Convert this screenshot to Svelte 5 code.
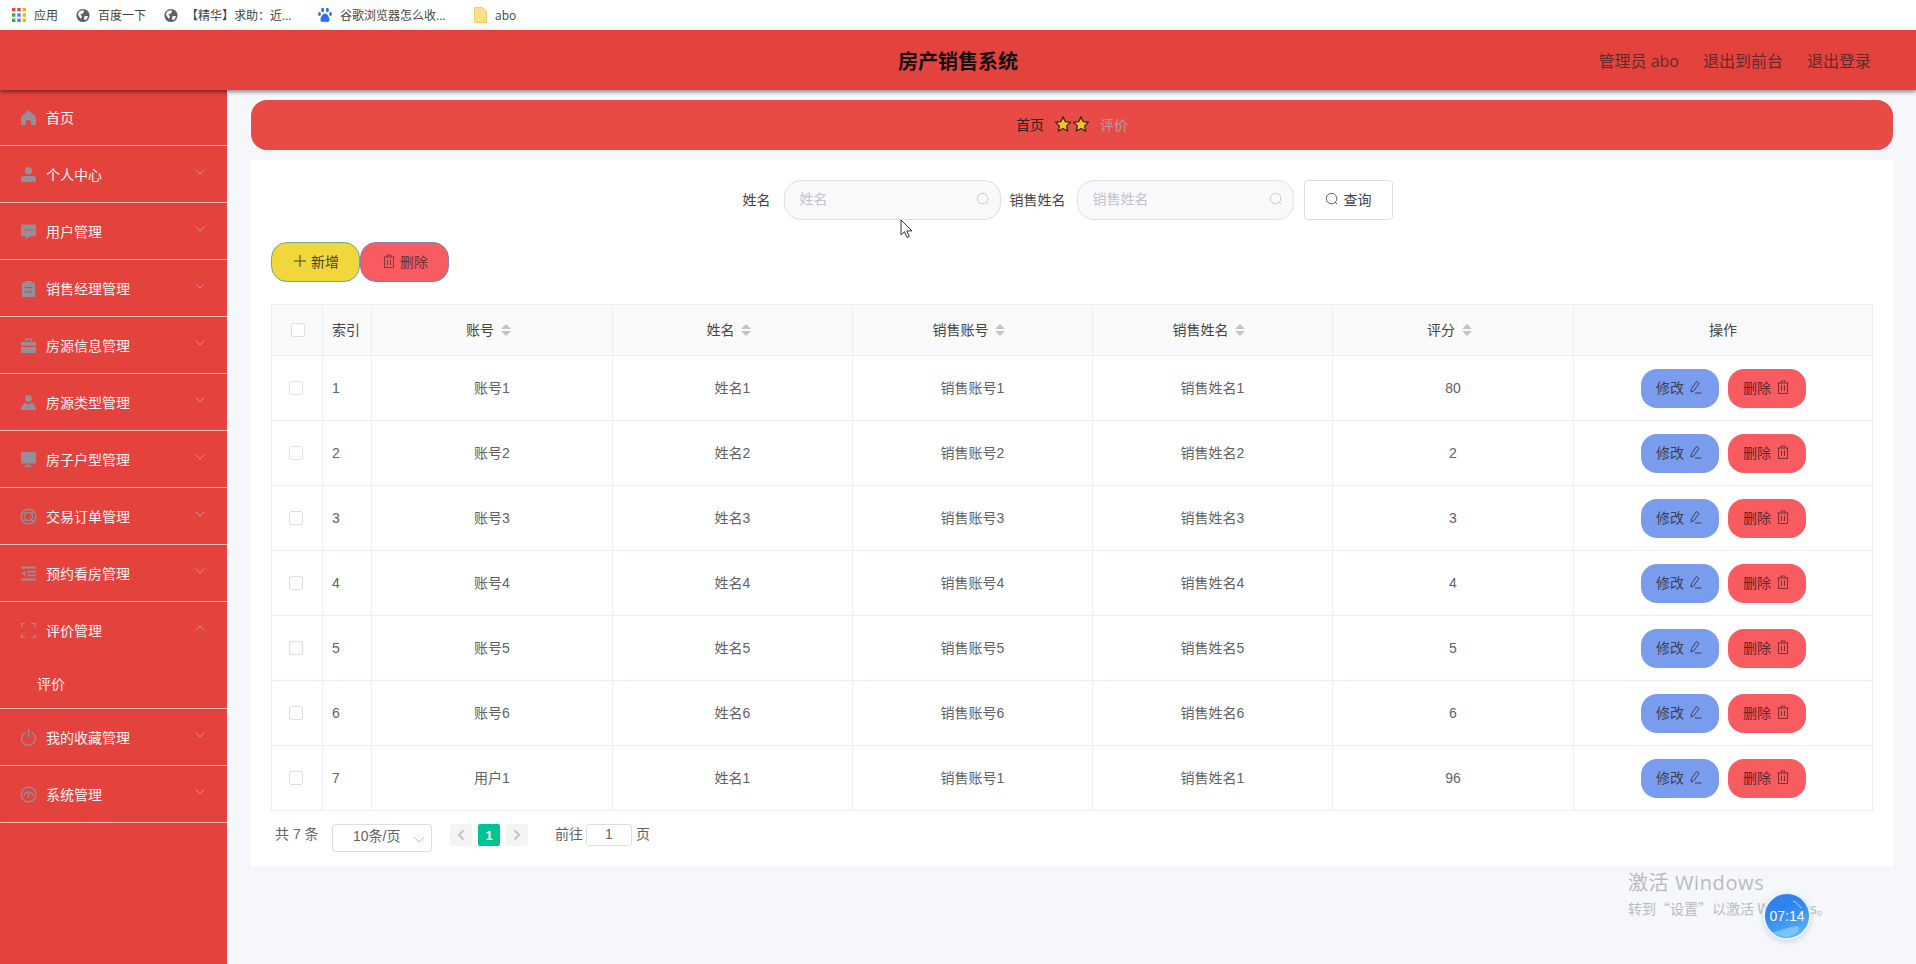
<script>
  const bookmarks = [
    { icon: 'apps', label: '应用', width: 64 },
    { icon: 'globe', label: '百度一下', width: 88 },
    { icon: 'globe', label: '【精华】求助：近...', width: 154 },
    { icon: 'paw', label: '谷歌浏览器怎么收...', width: 155 },
    { icon: 'folder', label: 'abo', width: 60 }
  ];

  const icons = {
    home: { d: 'M8 1 15 7.2V15h-4.5v-4.5h-5V15H1V7.2Z' },
    user: { d: 'M8 1a3.4 3.4 0 1 1 0 6.8A3.4 3.4 0 0 1 8 1ZM1 15v-2.6a3 3 0 0 1 3-3h8a3 3 0 0 1 3 3V15Z' },
    chat: { d: 'M1.8 1.5h12.4a.8.8 0 0 1 .8.8v9.4a.8.8 0 0 1-.8.8H8.6L5.4 15.5v-3H1.8a.8.8 0 0 1-.8-.8V2.300a.8.8 0 0 1 .8-.8ZM4 6v1.500h1.500V6ZM7.200 6v1.500h1.500V6ZM10.500 6v1.500H12V6Z' },
    clipboard: { d: 'M2.500 2.500H5V1h6v1.500h2.500a.6.6 0 0 1 .6.6V15.400a.6.6 0 0 1-.6.6h-11a.6.6 0 0 1-.6-.6V3.100a.6.6 0 0 1 .6-.6ZM4.500 6.500v1.200h7V6.500ZM4.500 10.500v1.200h7v-1.200Z' },
    case: { d: 'M5 4.500V1.500h6v3H9.800V2.700H6.200v1.800ZM1 4.800h14V8.300H1ZM1 9.300h14V15H1Z' },
    suit: { d: 'M8 1a3.200 3.200 0 1 1 0 6.400A3.200 3.200 0 0 1 8 1ZM5.200 8.200 8 10.200l2.800-2c2.200.7 3.800 3.500 4.400 6.800H.8C1.400 11.700 3 8.900 5.200 8.200Z' },
    screen: { d: 'M1 1h14v10.800H1ZM7.200 12.300h1.600v1.500H12V15H4v-1.200h3.200Z' },
    buoy: { stroke: true, d: 'M8 1a7 7 0 1 1 0 14A7 7 0 0 1 8 1ZM8 4.200a3.800 3.800 0 1 1 0 7.600A3.800 3.800 0 0 1 8 4.200ZM3 3 5.300 5.300M13 3 10.700 5.300M3 13 5.300 10.700M13 13 10.700 10.700' },
    list: { d: 'M1 1.500h14v1.700H1ZM7 5.300h8V7H7ZM7 9h8v1.700H7ZM1 12.800h14v1.700H1ZM5 5.600v4.800L1.500 8Z' },
    full: { stroke: true, d: 'M5 1.500H1.500V5M11 1.500h3.500V5M1.500 11v3.500H5M14.500 11v3.500H11' },
    power: { stroke: true, d: 'M5 3.200a6.500 6.500 0 1 0 6 0M8 .5v7' },
    gauge: { stroke: true, d: 'M8 1a7 7 0 1 1 0 14A7 7 0 0 1 8 1ZM3.500 9.500a4.600 4.600 0 0 1 9 0M8.800 6 7.400 11.200' }
  };

  const menu = [
    { icon: 'home', label: '首页', plain: true },
    { icon: 'user', label: '个人中心' },
    { icon: 'chat', label: '用户管理' },
    { icon: 'clipboard', label: '销售经理管理' },
    { icon: 'case', label: '房源信息管理' },
    { icon: 'suit', label: '房源类型管理' },
    { icon: 'screen', label: '房子户型管理' },
    { icon: 'buoy', label: '交易订单管理' },
    { icon: 'list', label: '预约看房管理' },
    { icon: 'full', label: '评价管理', open: true, sub: '评价' },
    { icon: 'power', label: '我的收藏管理' },
    { icon: 'gauge', label: '系统管理' }
  ];

  const columns = ['账号', '姓名', '销售账号', '销售姓名', '评分'];

  const rows = [
    ['账号1', '姓名1', '销售账号1', '销售姓名1', '80'],
    ['账号2', '姓名2', '销售账号2', '销售姓名2', '2'],
    ['账号3', '姓名3', '销售账号3', '销售姓名3', '3'],
    ['账号4', '姓名4', '销售账号4', '销售姓名4', '4'],
    ['账号5', '姓名5', '销售账号5', '销售姓名5', '5'],
    ['账号6', '姓名6', '销售账号6', '销售姓名6', '6'],
    ['用户1', '姓名1', '销售账号1', '销售姓名1', '96']
  ];
</script>

{#snippet searchIcon(size)}
  <svg class="line" width={size} height={size} viewBox="0 0 16 16"><circle cx="7.500" cy="7.500" r="6"/><path d="M11.800 11.800 14 14"/></svg>
{/snippet}

{#snippet trashIcon()}
  <svg class="line thin" width="12" height="14" viewBox="0 0 12 14"><path d="M.5 3h11M4 3V1h4v2M1.500 3v10.500h9V3M4.500 5.500v5.500M7.500 5.500v5.500"/></svg>
{/snippet}

{#snippet penIcon()}
  <svg class="line" width="12" height="14" viewBox="0 0 12 14"><path d="M6.500 1.500 9 3.500 3.800 10.800 1 12l.5-3.200ZM5 13h6.500"/></svg>
{/snippet}

{#snippet star()}
  <svg width="18" height="18" viewBox="0 0 24 24"><path class="star" d="M12 2.500l3 6.300 6.900.9-5 4.800 1.300 6.900-6.200-3.400-6.200 3.400 1.300-6.900-5-4.800 6.900-.9Z"/></svg>
{/snippet}

{#snippet bookmarkIcon(name)}
  {#if name === 'apps'}
    <svg width="14" height="14" viewBox="0 0 14 14">
      <rect x="0" y="0" width="3.400" height="3.400" fill="#e8453c"/><rect x="5.300" y="0" width="3.400" height="3.400" fill="#e8453c"/><rect x="10.600" y="0" width="3.400" height="3.400" fill="#f4b400"/>
      <rect x="0" y="5.300" width="3.400" height="3.400" fill="#34a853"/><rect x="5.300" y="5.300" width="3.400" height="3.400" fill="#4285f4"/><rect x="10.600" y="5.300" width="3.400" height="3.400" fill="#f4b400"/>
      <rect x="0" y="10.600" width="3.400" height="3.400" fill="#34a853"/><rect x="5.300" y="10.600" width="3.400" height="3.400" fill="#4285f4"/><rect x="10.600" y="10.600" width="3.400" height="3.400" fill="#f4b400"/>
    </svg>
  {:else if name === 'globe'}
    <svg width="15" height="15" viewBox="0 0 16 16"><circle cx="8" cy="8" r="7.500" fill="#5f6368"/><path fill="#fff" d="M4 3.200 7.800 2 9.500 3.500 7.500 6 5 6.500 6.800 9.500 5.500 12 2.800 8 2.200 6ZM10 8.500h3.600L12.500 12 10 13.500 9 11Z"/></svg>
  {:else if name === 'paw'}
    <svg width="14" height="16" viewBox="0 0 14 16" fill="#2f6fe4"><ellipse cx="4.600" cy="3" rx="1.500" ry="2.200"/><ellipse cx="9.400" cy="3" rx="1.500" ry="2.200"/><ellipse cx="1.500" cy="7" rx="1.400" ry="1.900"/><ellipse cx="12.500" cy="7" rx="1.400" ry="1.900"/><path d="M7 6.500c2 0 4 3 4.500 5.500.4 2-1.200 3.200-2.700 2.900-1.200-.2-2.400-.2-3.600 0C3.700 15.200 2.100 14 2.500 12 3 9.500 5 6.500 7 6.500Z"/></svg>
  {:else}
    <svg width="13" height="16" viewBox="0 0 13 16"><path fill="#fbe08a" stroke="#f3cf5e" d="M.5.500h8l4 3.500v11.500H.5Z"/></svg>
  {/if}
{/snippet}

<div class="page">
  <nav class="bookmarks">
    {#each bookmarks as item}
      <span class="bookmark" style="width: {item.width}px">
        <span class="mark">{@render bookmarkIcon(item.icon)}</span>
        {item.label}
      </span>
    {/each}
  </nav>

  <header class="topbar">
    <span></span>
    <h1>房产销售系统</h1>
    <div class="account">
      <span>管理员 abo</span>
      <span>退出到前台</span>
      <span>退出登录</span>
    </div>
  </header>

  <div class="body">
    <aside class="sidebar">
      {#each menu as item}
        <div class="group">
          <div class="item">
            <svg class="menu-icon" class:stroked={icons[item.icon].stroke} width="17" height="17" viewBox="0 0 16 16"><path fill-rule="evenodd" d={icons[item.icon].d}/></svg>
            <span class="label">{item.label}</span>
            {#if !item.plain}
              <svg class="chev" class:up={item.open} width="10" height="6" viewBox="0 0 10 6"><path d="M.5.500 5 5 9.500.500"/></svg>
            {/if}
          </div>
          {#if item.sub}
            <div class="sub">{item.sub}</div>
          {/if}
        </div>
      {/each}
    </aside>

    <main class="main">
      <div class="crumbs">
        <span class="crumb-home">首页</span>
        <span class="stars">{@render star()}{@render star()}</span>
        <span class="crumb-now">评价</span>
      </div>

      <section class="panel">
        <form class="search">
          <label for="q-name">姓名</label>
          <div class="field">
            <input id="q-name" placeholder="姓名" />
            {@render searchIcon(14)}
          </div>
          <label class="second" for="q-sale">销售姓名</label>
          <div class="field">
            <input id="q-sale" placeholder="销售姓名" />
            {@render searchIcon(14)}
          </div>
          <button type="button" class="query">{@render searchIcon(14)} 查询</button>
        </form>

        <div class="tools">
          <button type="button" class="pill add">
            <svg class="line" width="12" height="12" viewBox="0 0 12 12"><path d="M6 0v12M0 6h12"/></svg>
            新增
          </button>
          <button type="button" class="pill remove">{@render trashIcon()} 删除</button>
        </div>

        <table>
          <colgroup>
            <col style="width: 51px" />
            <col style="width: 49px" />
            <col style="width: 241px" />
            <col style="width: 240px" />
            <col style="width: 240px" />
            <col style="width: 240px" />
            <col style="width: 241px" />
            <col style="width: 299px" />
          </colgroup>
          <thead>
            <tr>
              <th class="check"><span class="box head-box"></span></th>
              <th class="index">索引</th>
              {#each columns as column}
                <th>
                  {column}
                  <span class="sort"><i class="asc"></i><i class="desc"></i></span>
                </th>
              {/each}
              <th>操作</th>
            </tr>
          </thead>
          <tbody>
            {#each rows as row, i}
              <tr>
                <td class="check"><span class="box"></span></td>
                <td class="index digits">{i + 1}</td>
                {#each row as cell, c}
                  <td class:digits={c === 4}>{cell}</td>
                {/each}
                <td class="digits">
                  <div class="actions">
                    <button type="button" class="act edit">修改 {@render penIcon()}</button>
                    <button type="button" class="act del">删除 {@render trashIcon()}</button>
                  </div>
                </td>
              </tr>
            {/each}
          </tbody>
        </table>

        <div class="pager">
          <span class="total">共 7 条</span>
          <span class="size">
            10条/页
            <svg class="chev-grey" width="12" height="7" viewBox="0 0 12 7"><path d="M1 1l5 5 5-5"/></svg>
          </span>
          <span class="pg off"><svg width="8" height="12" viewBox="0 0 8 12"><path d="M6.500 1.500 2 6l4.500 4.500"/></svg></span>
          <span class="pg on">1</span>
          <span class="pg off"><svg width="8" height="12" viewBox="0 0 8 12"><path d="M1.500 1.500 6 6l-4.500 4.500"/></svg></span>
          <span class="goto">前往</span>
          <span class="jump">1</span>
          <span class="unit">页</span>
        </div>
      </section>
    </main>
  </div>

  <div class="watermark">
    <div class="wm-title">激活 Windows</div>
    <div class="wm-text">转到“设置”以激活 Windows。</div>
  </div>

  <div class="timer">
    <svg class="timer-art" width="44" height="44" viewBox="0 0 44 44">
      <path class="wave" d="M8 38c8-1 14-5 25-6 3 4-1 9-11 11-6 0-10-2-14-5Z"/>
      <path class="arc" d="M28 7c3 1 6 4 8 7"/>
    </svg>
    <span class="time">07:14</span>
  </div>

  <svg class="cursor" width="15" height="20" viewBox="0 0 15 20"><path d="M1 1v15l3.500-3.300 2.500 5.800 2.300-1-2.500-5.600H12Z"/></svg>
</div>

<style>
  :global(body) {
    margin: 0;
    background: #f5f7fb;
  }
  .page {
    position: relative;
    width: 1916px;
    height: 964px;
    overflow: hidden;
    background: #f5f7fb;
    font-family: "Liberation Sans", "Noto Sans CJK SC", sans-serif;
    font-size: 14px;
    color: #606266;
  }
  .bookmarks {
    height: 30px;
    box-sizing: border-box;
    display: flex;
    align-items: center;
    padding-left: 12px;
    background: #fff;
    font-family: "Open Sans", "Noto Sans CJK SC", sans-serif;
    font-size: 12px;
    color: #444;
    white-space: nowrap;
  }
  .bookmark {
    display: flex;
    align-items: center;
    flex-shrink: 0;
    gap: 8px;
  }
  .mark {
    display: flex;
    width: 14px;
    justify-content: center;
  }
  .topbar {
    position: relative;
    z-index: 2;
    height: 60px;
    display: grid;
    grid-template-columns: 1fr auto 1fr;
    align-items: center;
    background: #e4423d;
    box-shadow: 0 2px 4px rgba(0, 0, 0, 0.45);
  }
  h1 {
    margin: 0;
    font-size: 20px;
    font-weight: 700;
    color: #111;
  }
  .account {
    display: flex;
    justify-content: flex-end;
    gap: 24px;
    padding-right: 45px;
    font-family: "Open Sans", "Noto Sans CJK SC", sans-serif;
    font-size: 16px;
    color: #5f2b2d;
  }
  .body {
    display: grid;
    grid-template-columns: 227px 1fr;
    height: 874px;
  }
  .sidebar {
    background: #e4423d;
    margin-top: -1px;
  }
  .group {
    border-bottom: 1px solid #f2bcb9;
  }
  .item {
    height: 56px;
    display: flex;
    align-items: center;
    gap: 9px;
    padding: 0 22px 0 20px;
    color: #fdf3f2;
  }
  .menu-icon {
    fill: #94909a;
    flex-shrink: 0;
  }
  .menu-icon.stroked {
    fill: none;
    stroke: #94909a;
    stroke-width: 1.200;
  }
  .label {
    flex: 1;
  }
  .chev {
    margin-top: -5px;
    fill: none;
    stroke: #ec8b88;
  }
  .chev.up {
    transform: scaleY(-1);
  }
  .sub {
    height: 50px;
    display: flex;
    align-items: center;
    padding-left: 37px;
    color: #fdf3f2;
  }
  .main {
    padding: 10px 24px 0;
  }
  .crumbs {
    height: 50px;
    box-sizing: border-box;
    padding-bottom: 2px;
    display: flex;
    align-items: center;
    justify-content: center;
    gap: 10px;
    margin-bottom: 10px;
    border-radius: 16px;
    background: #e84a45;
  }
  .crumb-home {
    font-weight: 400;
    color: #2c2122;
  }
  .crumb-now {
    color: #b59ea6;
  }
  .stars {
    display: flex;
    gap: 0;
  }
  .star {
    fill: #f7c321;
    stroke: #3b2a22;
    stroke-width: 1.800;
    stroke-linejoin: round;
  }
  .panel {
    height: 706px;
    box-sizing: border-box;
    padding: 20px 20px 0;
    background: #fff;
  }
  .line {
    fill: none;
    stroke: currentColor;
    stroke-width: 1;
    flex-shrink: 0;
  }
  .thin {
    stroke-width: 0.800;
  }
  .search {
    display: flex;
    align-items: center;
    justify-content: center;
    padding-right: 9px;
    height: 40px;
    color: #444;
  }
  .search label {
    margin-right: 13px;
    padding-bottom: 2px;
  }
  .search .second {
    margin-left: 9px;
    margin-right: 11px;
  }
  .field {
    position: relative;
    width: 217px;
    height: 40px;
    color: #c0c4cc;
  }
  .field input {
    width: 100%;
    height: 100%;
    box-sizing: border-box;
    padding: 0 30px 2px 15px;
    border: 1px solid #dcdfe6;
    border-radius: 17px;
    background: #f9f9fb;
    font: inherit;
    outline: none;
  }
  .field input::placeholder {
    color: #c0c4cc;
  }
  .field svg {
    position: absolute;
    right: 11px;
    top: 12px;
  }
  .query {
    width: 89px;
    height: 40px;
    margin-left: 10px;
    padding: 0 0 2px;
    display: flex;
    align-items: center;
    justify-content: center;
    gap: 5px;
    border: 1px solid #dcdfe6;
    border-radius: 4px;
    background: #fff;
    color: #444;
    font: inherit;
  }
  .tools {
    display: flex;
    margin-top: 22px;
  }
  .pill {
    width: 89px;
    height: 40px;
    padding: 0 0 2px 2px;
    display: flex;
    align-items: center;
    justify-content: center;
    gap: 5px;
    border-radius: 16px;
    font: inherit;
    color: #4a4030;
  }
  .add {
    background: #f0d83c;
    border: 1px solid #6fa890;
  }
  .remove {
    background: #f95c60;
    border: 1px solid #7d7fbe;
    color: #6b3036;
  }
  table {
    width: 1601px;
    margin-top: 22px;
    table-layout: fixed;
    border-collapse: collapse;
  }
  th, td {
    border: 1px solid #ebeef5;
    padding: 0 0 2px;
    text-align: center;
    font-weight: 400;
  }
  thead tr {
    height: 51px;
    background: #fafafa;
  }
  th {
    color: #444;
  }
  tbody tr {
    height: 65px;
  }
  td.digits, .check {
    padding-bottom: 0;
  }
  .index {
    text-align: left;
    padding-left: 9px;
  }
  .box {
    display: block;
    box-sizing: border-box;
    width: 14px;
    height: 14px;
    margin-left: 17px;
    border: 1px solid #dcdfe6;
    border-radius: 2px;
    background: #fff;
  }
  .head-box {
    margin-left: 19px;
  }
  .sort {
    display: inline-flex;
    flex-direction: column;
    gap: 2px;
    margin: 0 7px 2px 3px;
    vertical-align: middle;
  }
  .sort i {
    width: 0;
    height: 0;
    border: 5px solid transparent;
  }
  .asc {
    border-top-width: 0 !important;
    border-bottom-color: #c0c4cc !important;
  }
  .desc {
    border-bottom-width: 0 !important;
    border-top-color: #c0c4cc !important;
  }
  .actions {
    display: flex;
    justify-content: center;
    gap: 9px;
  }
  .act {
    width: 78px;
    height: 39px;
    padding: 0 1px 2px 0;
    display: flex;
    align-items: center;
    justify-content: center;
    gap: 6px;
    border: none;
    border-radius: 16px;
    font: inherit;
  }
  .edit {
    background: #7a9cef;
    color: #3c404f;
  }
  .del {
    background: #f95c60;
    color: #5f272b;
  }
  .pager {
    display: flex;
    align-items: flex-start;
    margin-top: 13px;
    height: 28px;
    font-size: 14px;
  }
  .total {
    margin-left: 4px;
    width: 57px;
    line-height: 20px;
  }
  .size {
    position: relative;
    box-sizing: border-box;
    width: 100px;
    height: 28px;
    padding-left: 20px;
    line-height: 23px;
    border: 1px solid #dcdfe6;
    border-radius: 3px;
    margin-right: 18px;
  }
  .chev-grey {
    position: absolute;
    right: 6px;
    top: 11px;
    fill: none;
    stroke: #c0c4cc;
  }
  .pg {
    width: 22px;
    height: 22px;
    display: flex;
    align-items: center;
    justify-content: center;
    margin-right: 6px;
    border-radius: 2px;
    font-size: 13px;
    font-weight: 700;
  }
  .off {
    background: #f4f4f5;
    fill: none;
    stroke: #c0c4cc;
    stroke-width: 2;
  }
  .on {
    background: #00c292;
    color: #fff;
  }
  .goto {
    margin-left: 21px;
    line-height: 20px;
  }
  .jump {
    box-sizing: border-box;
    width: 46px;
    height: 22px;
    margin: 0 4px 0 3px;
    border: 1px solid #dcdfe6;
    border-radius: 3px;
    line-height: 19px;
    text-align: center;
  }
  .unit {
    line-height: 20px;
  }
  .watermark {
    position: absolute;
    left: 1628px;
    top: 870px;
    font-family: "Noto Sans CJK SC", sans-serif;
    color: #b9bbc0;
    white-space: nowrap;
  }
  .wm-title {
    font-family: "Open Sans", "Noto Sans CJK SC", sans-serif;
    font-size: 20px;
    line-height: 26px;
    letter-spacing: 0.6px;
  }
  .wm-text {
    font-size: 14px;
    line-height: 24px;
  }
  .timer {
    position: absolute;
    left: 1763px;
    top: 892px;
    width: 48px;
    height: 48px;
    border-radius: 50%;
    border: 2px solid #e9f0f8;
    box-sizing: border-box;
    display: flex;
    align-items: center;
    justify-content: center;
    overflow: hidden;
    background: linear-gradient(155deg, #2f83ee 35%, #5db8fb 95%);
    box-shadow: 0 2px 5px rgba(80, 120, 170, 0.25);
    color: #fff;
    font-size: 14px;
  }
  .timer-art {
    position: absolute;
    inset: 0;
  }
  .wave {
    fill: #8fd0fb;
    opacity: 0.7;
  }
  .arc {
    fill: none;
    stroke: #dbeafe;
    stroke-width: 0.800;
  }
  .time {
    position: relative;
  }
  .cursor {
    position: absolute;
    left: 900px;
    top: 219px;
    fill: #fff;
    stroke: #333;
    stroke-width: 1;
  }
</style>
